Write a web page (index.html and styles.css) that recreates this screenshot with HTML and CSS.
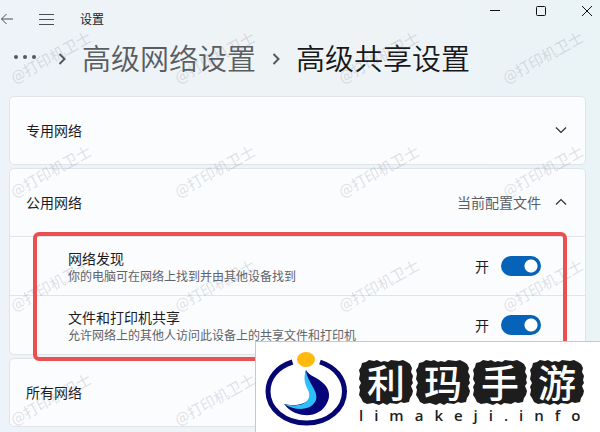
FILE: index.html
```html
<!DOCTYPE html>
<html lang="zh-CN">
<head>
<meta charset="utf-8">
<meta name="viewport" content="width=device-width, initial-scale=1">
<title>设置</title>
<link rel="stylesheet" href="styles.css">
</head>
<body>
<div class="window">
  <header class="titlebar">
    <button class="icon-btn" type="button" aria-label="返回">
      <svg class="ink-soft" width="14" height="14" viewBox="0 0 14 14"><path d="M13 7H1.500M6.500 2L1.500 7l5 5"/></svg>
    </button>
    <button class="icon-btn" type="button" aria-label="菜单">
      <svg class="ink-soft" width="16" height="14" viewBox="0 0 16 14"><path d="M0 2.500h15M0 7.500h15M0 12.500h15"/></svg>
    </button>
    <span class="app-name">设置</span>
    <div class="window-controls">
      <button class="icon-btn" type="button" aria-label="最小化">
        <svg width="10" height="10" viewBox="0 0 10 10"><path d="M0 4.500h10"/></svg>
      </button>
      <button class="icon-btn" type="button" aria-label="最大化">
        <svg width="10" height="10" viewBox="0 0 10 10"><rect x=".5" y=".5" width="9" height="9" rx="1"/></svg>
      </button>
      <button class="icon-btn" type="button" aria-label="关闭">
        <svg width="10" height="10" viewBox="0 0 10 10"><path d="M0 0l10 10M10 0L0 10"/></svg>
      </button>
    </div>
  </header>

  <nav class="crumbs" aria-label="路径">
    <button class="icon-btn more" type="button" aria-label="更多">
      <svg class="dots" width="24" height="12" viewBox="0 0 24 12"><circle cx="3" cy="4" r="2"/><circle cx="12" cy="4" r="2"/><circle cx="21" cy="4" r="2"/></svg>
    </button>
    <svg class="sep" width="8" height="12" viewBox="0 0 8 12"><path d="M1.500 1l5 5-5 5"/></svg>
    <a class="crumb" href="#network">高级网络设置</a>
    <svg class="sep" width="8" height="12" viewBox="0 0 8 12"><path d="M1.500 1l5 5-5 5"/></svg>
    <h1 class="crumb current">高级共享设置</h1>
  </nav>

  <main class="cards">
    <section class="card">
      <button class="card-head" type="button" aria-expanded="false">
        <span>专用网络</span>
        <svg class="chev" width="12" height="8" viewBox="0 0 12 8"><path d="M1 1.500l5 5 5-5"/></svg>
      </button>
    </section>

    <section class="card">
      <button class="card-head" type="button" aria-expanded="true">
        <span>公用网络</span>
        <span class="state">当前配置文件</span>
        <svg class="chev" width="12" height="8" viewBox="0 0 12 8"><path d="M1 6.500l5-5 5 5"/></svg>
      </button>
      <div class="row">
        <label class="row-text" for="discovery">
          <span class="row-title">网络发现</span>
          <span class="row-note">你的电脑可在网络上找到并由其他设备找到</span>
        </label>
        <span>开</span>
        <input class="toggle" id="discovery" type="checkbox" role="switch" checked>
      </div>
      <div class="row">
        <label class="row-text" for="sharing">
          <span class="row-title">文件和打印机共享</span>
          <span class="row-note">允许网络上的其他人访问此设备上的共享文件和打印机</span>
        </label>
        <span>开</span>
        <input class="toggle" id="sharing" type="checkbox" role="switch" checked>
      </div>
      <div class="highlight"></div>
    </section>

    <section class="card">
      <button class="card-head" type="button" aria-expanded="false">
        <span>所有网络</span>
      </button>
    </section>
  </main>

  <div class="watermarks" aria-hidden="true">
    <span>@打印机卫士</span><span>@打印机卫士</span><span>@打印机卫士</span><span>@打印机卫士</span>
    <span>@打印机卫士</span><span>@打印机卫士</span><span>@打印机卫士</span><span>@打印机卫士</span>
    <span>@打印机卫士</span><span>@打印机卫士</span><span>@打印机卫士</span><span>@打印机卫士</span>
    <span>@打印机卫士</span><span>@打印机卫士</span><span>@打印机卫士</span><span>@打印机卫士</span>
  </div>

  <aside class="brand">
    <svg class="brand-mark" width="83" height="75" viewBox="0 0 83 75">
      <path d="M27.500 10C12 15 3 26 3 39.500c0 17.500 17 31.500 38.500 31.500s38-14 38-31.500C79.500 26 70 15 55 10" fill="none" stroke="#060672" stroke-width="5"/>
      <ellipse cx="41" cy="7.500" rx="9" ry="7.500" fill="#ffb90f"/>
      <path d="M41 18C44 24 52 25 58 31C64 36 66 44 62 51C58 60 48 64 39 63C29 62 23 57 19 52C30 55 44 52 46 44C47 37 37 30 41 18Z" fill="#06067a"/>
      <path d="M41 18C38 26 40 32 43 38C48 48 38 57 19 52C32 60 47 58 51 48C54 39 42 30 41 18Z" fill="#2cc0fb"/>
    </svg>
    <div class="brand-name">
      <div class="stamps">
        <div class="stamp"><span>利</span></div>
        <div class="stamp"><span>玛</span></div>
        <div class="stamp"><span>手</span></div>
        <div class="stamp"><span>游</span></div>
      </div>
      <div class="brand-url">limakeji.info</div>
    </div>
  </aside>

  <svg class="defs" width="0" height="0" aria-hidden="true">
    <clipPath id="stamp-shape">
      <path d="M7 2L10 0L15 1L18 0L22 2L25 1L29 2L32 0L40 1L44 0L48 2L51 4L53 8L52 12L54 16L53 20L54 23L52 26L54 31L53 35L51 38L50 42L45 43L42 42L38 44L31 43L28 45L24 43L20 45L14 43L8 44L4 42L2 38L0 35L1 30L0 27L2 23L0 19L1 14L0 10L2 7L3 3Z"/>
    </clipPath>
  </svg>
</div>
</body>
</html>
```
FILE: styles.css
```css
* {
  box-sizing: border-box;
}

body {
  margin: 0;
  font-family: "Noto Sans CJK SC", sans-serif;
  font-size: 14px;
  line-height: 20px;
  color: #1b1c1f;
}

.window {
  position: relative;
  min-height: 100vh;
  overflow: hidden;
  background: linear-gradient(90deg, #edf3f8, #eff3f6 60%, #eaf3f6);
}

.icon-btn {
  display: flex;
  padding: 0;
  border: 0;
  background: none;
}

.icon-btn svg {
  fill: none;
  stroke: #111;
  stroke-width: 1;
}

.icon-btn .ink-soft {
  stroke: #4c4f55;
}

.icon-btn .dots {
  fill: #55585a;
  stroke: none;
}

.titlebar {
  display: flex;
  align-items: center;
  height: 38px;
  gap: 25px;
}

.app-name {
  font-size: 12px;
}

.window-controls {
  display: flex;
  align-self: flex-start;
  gap: 36px;
  margin-left: auto;
  padding: 6px 8px 0 0;
}

.crumbs {
  display: flex;
  align-items: center;
  gap: 16px;
  height: 42px;
  padding-left: 13px;
}

.more {
  margin-right: 5px;
}

.crumb {
  margin: 0;
  padding-bottom: 4px;
  font-size: 29px;
  font-weight: 350;
  line-height: 38px;
  color: #5a5d5f;
  text-decoration: none;
  white-space: nowrap;
}

.current {
  color: #17181a;
}

.sep,
.chev {
  flex: none;
  fill: none;
  stroke: #55585a;
  stroke-width: 2;
}

.chev {
  stroke: #2c2f34;
  stroke-width: 1.2;
}

.cards {
  display: flex;
  flex-direction: column;
  gap: 3px;
  padding: 16px 14px 5px 9px;
}

.card {
  position: relative;
  border: 1px solid #dfe4ea;
  border-radius: 5px;
  background: #fbfcfe;
}

.card-head {
  display: flex;
  align-items: center;
  gap: 14px;
  width: 100%;
  height: 67px;
  padding: 0 18px 2px 16px;
  border: 0;
  background: none;
  color: inherit;
  font: inherit;
}

.card-head .chev {
  margin-left: auto;
}

.state {
  margin-left: auto;
  color: #5b5e62;
}

.state + .chev {
  margin-left: 0;
}

.row {
  display: flex;
  align-items: center;
  gap: 12px;
  height: 59px;
  padding: 0 44px 0 58px;
  border-top: 1px solid #e0e4e9;
}

.row-text {
  display: flex;
  flex-direction: column;
  flex: 1;
  padding-top: 2px;
}

.row-title {
  line-height: 18px;
}

.row-note {
  font-size: 12px;
  line-height: 18px;
  color: #606368;
}

.toggle {
  appearance: none;
  width: 40px;
  height: 20px;
  margin: 0;
  border-radius: 10px;
  background: radial-gradient(circle at 30px 10px, #fff 6px, #0563b8 7px);
}

.highlight {
  position: absolute;
  z-index: 1;
  inset: 63px 18px -7px 23px;
  border: 4px solid #e9504f;
  border-radius: 6px;
  pointer-events: none;
}

.watermarks {
  position: absolute;
  top: 0;
  left: -31px;
  display: grid;
  grid-template-columns: repeat(4, 164px);
  grid-auto-rows: 114px;
  place-items: center;
  font-size: 15px;
  color: rgba(110, 120, 135, 0.22);
  pointer-events: none;
}

.watermarks span {
  transform: rotate(-29deg);
}

.brand {
  position: absolute;
  z-index: 2;
  right: 0;
  bottom: 0;
  display: flex;
  align-items: flex-start;
  gap: 11px;
  width: 345px;
  height: 91px;
  padding: 10px 0 0 9px;
  border: solid #c3c9d2;
  border-width: 1px 0 0 1px;
  background: #fff;
}

.brand-name {
  padding-top: 8px;
}

.stamps {
  display: flex;
  gap: 3px;
}

.stamp {
  display: flex;
  justify-content: center;
  width: 54px;
  height: 45px;
  background: #1d1d1d;
  clip-path: url(#stamp-shape);
  color: #fff;
  font-size: 38px;
  font-weight: 500;
  line-height: 42px;
}

.defs {
  position: absolute;
}

.brand-url {
  font-family: "Open Sans", sans-serif;
  font-size: 15px;
  font-weight: 600;
  letter-spacing: 11px;
  line-height: 20px;
  white-space: nowrap;
}
```
